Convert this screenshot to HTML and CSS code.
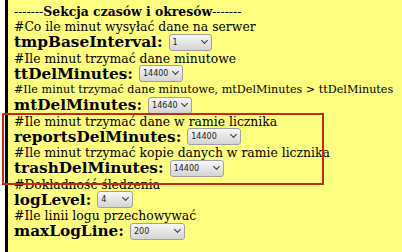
FILE: index.html
```html
<!DOCTYPE html>
<html lang="pl">
<head>
    <meta charset="UTF-8">
    <title>Ustawienia</title>
    <link rel="stylesheet" href="styles.css">
</head>
<body>
    <div class="panel">
        <div class="section-title">-------<b>Sekcja czasów i okresów</b>-------</div>

        <div class="comment">#Co ile minut wysyłać dane na serwer</div>
        <div class="field">
            <label for="tmpBaseInterval">tmpBaseInterval:</label>
            <span class="select-wrap"><select id="tmpBaseInterval" class="w-43"><option>1</option></select></span>
        </div>

        <div class="comment">#Ile minut trzymać dane minutowe</div>
        <div class="field">
            <label for="ttDelMinutes">ttDelMinutes:</label>
            <span class="select-wrap"><select id="ttDelMinutes" class="w-44"><option>14400</option></select></span>
        </div>

        <div class="comment comment-long">#Ile minut trzymać dane minutowe, mtDelMinutes &gt; ttDelMinutes</div>
        <div class="field">
            <label for="mtDelMinutes">mtDelMinutes:</label>
            <span class="select-wrap"><select id="mtDelMinutes" class="w-44"><option>14640</option></select></span>
        </div>

        <div class="comment">#Ile minut trzymać dane w ramie licznika</div>
        <div class="field">
            <label for="reportsDelMinutes">reportsDelMinutes:</label>
            <span class="select-wrap"><select id="reportsDelMinutes" class="w-54"><option>14400</option></select></span>
        </div>

        <div class="comment">#Ile minut trzymać kopie danych w ramie licznika</div>
        <div class="field">
            <label for="trashDelMinutes">trashDelMinutes:</label>
            <span class="select-wrap"><select id="trashDelMinutes" class="w-54"><option>14400</option></select></span>
        </div>

        <div class="comment">#Dokładność śledzenia</div>
        <div class="field">
            <label for="logLevel">logLevel:</label>
            <span class="select-wrap"><select id="logLevel" class="w-36"><option>4</option></select></span>
        </div>

        <div class="comment">#Ile linii logu przechowywać</div>
        <div class="field">
            <label for="maxLogLine">maxLogLine:</label>
            <span class="select-wrap"><select id="maxLogLine" class="w-55"><option>200</option></select></span>
        </div>
    </div>

    <div class="highlight"></div>
</body>
</html>
```

FILE: styles.css
```css
body {
    margin: 0;
    padding: 0 0 0 5px;
    background-color: #fff;
    font-family: "DejaVu Serif", serif;
    color: #000;
}

.panel {
    min-height: 252px;
    box-sizing: border-box;
    background-color: #ffff80;
    border-left: 3px solid #000;
    padding: 4px 0 0 6px;
}

.section-title {
    font-size: 12.4px;
    line-height: 15px;
    white-space: nowrap;
}

.comment {
    font-size: 12.4px;
    line-height: 15px;
    white-space: nowrap;
}

.comment-long {
    font-size: 11.2px;
}

.field {
    display: flex;
    align-items: center;
    height: 16.5px;
}

.field label {
    font-size: 15.3px;
    font-weight: bold;
    margin-right: 6px;
    white-space: nowrap;
}

.select-wrap {
    position: relative;
    display: inline-block;
    height: 17px;
}

.select-wrap select {
    appearance: none;
    -webkit-appearance: none;
    display: block;
    width: 43px;
    height: 17px;
    padding: 0 0 0 3px;
    font-family: "DejaVu Sans", sans-serif;
    font-size: 8px;
    color: #222;
    background: linear-gradient(#f7f7f7, #d4d4d4);
    border: 1px solid #a0a0a0;
    border-radius: 3px;
}

.select-wrap::after {
    content: "";
    position: absolute;
    right: 5px;
    top: 4px;
    width: 4px;
    height: 4px;
    border-right: 1.6px solid #333;
    border-bottom: 1.6px solid #333;
    transform: rotate(45deg);
    pointer-events: none;
}

.select-wrap select.w-36 {
    width: 36px;
}

.select-wrap select.w-43 {
    width: 43px;
}

.select-wrap select.w-44 {
    width: 44px;
}

.select-wrap select.w-54 {
    width: 54px;
}

.select-wrap select.w-55 {
    width: 55px;
}

.highlight {
    position: absolute;
    left: 2px;
    top: 113px;
    width: 318px;
    height: 68px;
    border: 2px solid #c82a12;
    pointer-events: none;
}
```
